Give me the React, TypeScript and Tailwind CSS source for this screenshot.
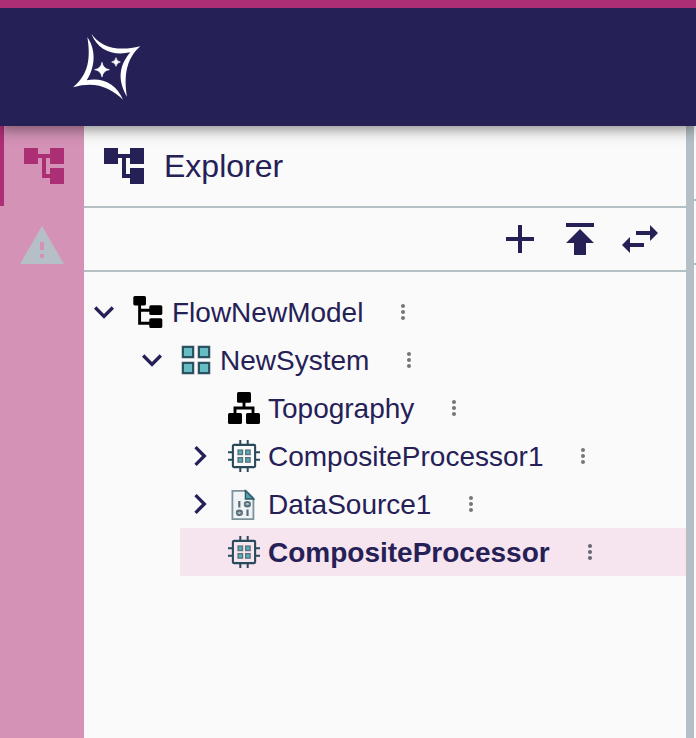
import type { ReactNode } from "react";

function Icon({ d, className }: { d: string; className: string }) {
  return (
    <svg viewBox="0 0 24 24" fill="currentColor" aria-hidden="true" className={className}>
      <path d={d} />
    </svg>
  );
}

const ACCOUNT_TREE = "M22 11V3h-7v3H9V3H2v8h7V8h2v10h4v3h7v-8h-7v3h-2V8h2v3z";
const WARNING = "M1 21h22L12 2 1 21zm12-3h-2v-2h2v2zm0-4h-2v-4h2v4z";
const ADD = "M19 13h-6v6h-2v-6H5v-2h6V5h2v6h6v2z";
const PUBLISH = "M5 4v2h14V4H5zm0 10h4v6h6v-6h4l-7-7-7 7z";
const SWAP =
  "M6.99 11L3 15l3.99 4v-3H14v-2H6.99v-3zM21 9l-3.99-4v3H10v2h7.01v3L21 9z";
const EXPAND_MORE = "M16.59 8.59L12 13.17 7.41 8.59 6 10l6 6 6-6z";
const CHEVRON_RIGHT = "M10 6L8.59 7.41 13.17 12l-4.58 4.59L10 18l6-6z";
const MORE_VERT =
  "M12 8c1.1 0 2-.9 2-2s-.9-2-2-2-2 .9-2 2 .9 2 2 2zm0 2c-1.1 0-2 .9-2 2s.9 2 2 2 2-.9 2-2-.9-2-2-2zm0 6c-1.1 0-2 .9-2 2s.9 2 2 2 2-.9 2-2-.9-2-2-2z";

function Logo() {
  return (
    <svg viewBox="39 99 204 204" fill="#fff" aria-hidden="true" className="size-17">
      <path d="M94 101 C120 138 168 157 241 139 C196 178 192 232 201 290 C176 248 172 202 211 157 C160 168 114 152 94 101Z" />
      <path d="M82 111 C105 144 110 194 80 241 C125 231 168 250 189 299 C152 264 107 242 39 262 C87 223 92 172 82 111Z" />
      <path
        d="M126 187 Q129 206 148 209 Q129 212 126 231 Q123 212 104 209 Q123 206 126 187Z"
        stroke="#fff"
        strokeWidth="2"
      />
      <path
        d="M168 173 Q170 184 181 186 Q170 188 168 199 Q166 188 155 186 Q166 184 168 173Z"
        stroke="#fff"
        strokeWidth="2"
      />
    </svg>
  );
}

function ModelIcon() {
  return (
    <svg viewBox="0 0 32 32" aria-hidden="true" className="size-8 shrink-0">
      <rect x="1.3" y="0" width="12.7" height="9.4" rx="1.6" />
      <rect x="17.3" y="9.2" width="13" height="9.8" rx="1.6" />
      <rect x="17.3" y="22.2" width="13" height="9.8" rx="1.6" />
      <path d="M7.6 8v19.2H18M7.6 14.3H18" fill="none" stroke="#000" strokeWidth="2.9" />
    </svg>
  );
}

function SystemIcon() {
  return (
    <svg viewBox="0 0 32 32" aria-hidden="true" className="size-8 shrink-0">
      {[2, 18].map((x) =>
        [2, 18].map((y) => (
          <g key={x + "-" + y}>
            <rect x={x - 0.5} y={y - 0.5} width="13" height="13" fill="#8fa3ac" />
            <rect x={x + 1} y={y + 1} width="10" height="10" fill="#66bcc0" stroke="#24485a" strokeWidth="1.8" />
          </g>
        ))
      )}
    </svg>
  );
}

function TopographyIcon() {
  return (
    <svg viewBox="0 0 32 32" aria-hidden="true" className="size-8 shrink-0">
      <rect x="9" y="0" width="14" height="10.8" rx="1.6" />
      <rect x="0" y="21" width="14" height="11" rx="1.6" />
      <rect x="18" y="21" width="14" height="11" rx="1.6" />
      <path d="M16 10v6M7 22v-6h18v6" fill="none" stroke="#000" strokeWidth="2.9" />
    </svg>
  );
}

function ProcessorIcon() {
  return (
    <svg viewBox="0 0 32 32" aria-hidden="true" className="size-8 shrink-0">
      <path
        d="M12.3 0v4M19.7 0v4M12.3 28v4M19.7 28v4M0 12.3h4M0 19.7h4M28 12.3h4M28 19.7h4"
        stroke="#2a4a5a"
        strokeWidth="2"
      />
      <rect x="4.9" y="4.9" width="22.2" height="22.2" rx="1" fill="none" stroke="#2a4a5a" strokeWidth="2.1" />
      {[9.4, 17].map((x) =>
        [9.4, 17].map((y) => (
          <g key={x + "-" + y}>
            <rect x={x} y={y} width="5.8" height="5.8" fill="#587280" />
            <rect x={x + 1.4} y={y + 1.4} width="3" height="3" fill="#55b4b6" />
          </g>
        ))
      )}
    </svg>
  );
}

function DataIcon() {
  return (
    <svg viewBox="0 0 32 32" aria-hidden="true" className="size-8 shrink-0">
      <path d="M4.4 2.8H18l7.4 7.4v21H4.4z" fill="#f0f3f4" stroke="#7b929b" strokeWidth="1.8" />
      <path d="M17.4 2.6l8.4 8.4h-8.4z" fill="#4ba3ab" stroke="#2f5566" strokeWidth="1.3" />
      <g fill="none" stroke="#566c79" strokeWidth="2.2">
        <path d="M11.3 13v6.4M19.5 21.6V28" />
        <ellipse cx="19.4" cy="16.2" rx="2.5" ry="2.2" />
        <ellipse cx="11.4" cy="24.8" rx="2.5" ry="2.2" />
      </g>
      <path d="M16.5 16.2h5.6M8.6 24.8h5.6" stroke="#8496a0" strokeWidth="1" />
    </svg>
  );
}

type ItemProps = {
  label: string;
  icon: ReactNode;
  state?: "open" | "closed";
  selected?: boolean;
  children?: ReactNode;
};

function TreeItem({ label, icon, state, selected, children }: ItemProps) {
  return (
    <li role="treeitem" aria-selected={!!selected} aria-expanded={state ? state === "open" : undefined}>
      <div className={selected ? "flex h-12 items-center gap-2 bg-[#f6e4ee]" : "flex h-12 items-center gap-2"}>
        {state ? (
          <button type="button" aria-label={"Toggle " + label} className="size-10 shrink-0">
            <Icon d={state === "open" ? EXPAND_MORE : CHEVRON_RIGHT} className="size-10" />
          </button>
        ) : (
          <span className="w-10 shrink-0" />
        )}
        {icon}
        <span className={selected ? "pt-0.5 font-bold" : "pt-0.5"}>{label}</span>
        <button
          type="button"
          aria-label={"More actions for " + label}
          className={selected ? "ml-5 size-6 text-[#646770]" : "ml-5 size-6 text-[#757575]"}
        >
          <Icon d={MORE_VERT} className="size-6" />
        </button>
      </div>
      {children && (
        <ul role="group" className="pl-12">
          {children}
        </ul>
      )}
    </li>
  );
}

function ToolButton({ label, d }: { label: string; d: string }) {
  return (
    <button type="button" aria-label={label} className="size-12">
      <Icon d={d} className="size-12" />
    </button>
  );
}

export default function App() {
  return (
    <div className="flex min-h-screen flex-col bg-[#fafafa] font-['Liberation_Sans',Arial,sans-serif] text-[#252056]">
      <header className="relative z-10 flex h-[126px] shrink-0 items-center border-t-8 border-[#ac2f76] bg-[#252056] px-[73px] shadow-[0_4px_8px_-2px_rgba(0,0,0,0.2),0_8px_10px_0_rgba(0,0,0,0.14),0_2px_20px_0_rgba(0,0,0,0.12)]">
        <a href="#home" aria-label="Home">
          <Logo />
        </a>
      </header>
      <div className="flex grow">
        <nav aria-label="Views" className="flex w-21 shrink-0 flex-col bg-[#d493b6]">
          <button
            type="button"
            aria-label="Explorer"
            className="flex h-20 items-center justify-center border-l-4 border-[#ac2f76] text-[#ac2f76]"
          >
            <Icon d={ACCOUNT_TREE} className="size-12" />
          </button>
          <button
            type="button"
            aria-label="Validation"
            className="flex h-20 items-center justify-center text-[#b5bfc5]"
          >
            <Icon d={WARNING} className="size-12" />
          </button>
        </nav>
        <main className="min-w-0 grow">
          <div className="flex h-[82px] items-center gap-4 border-b-2 border-[#b3bfc2] px-4">
            <Icon d={ACCOUNT_TREE} className="size-12" />
            <h1 className="text-[32px] leading-10">Explorer</h1>
          </div>
          <div className="flex h-16 items-center justify-end gap-3 border-b-2 border-[#b3bfc2] pr-[22px]">
            <ToolButton label="New model" d={ADD} />
            <ToolButton label="Upload model" d={PUBLISH} />
            <ToolButton label="Synchronize selection" d={SWAP} />
          </div>
          <ul role="tree" aria-label="Explorer" className="py-4 text-[28px] leading-10">
            <TreeItem label="FlowNewModel" icon={<ModelIcon />} state="open">
              <TreeItem label="NewSystem" icon={<SystemIcon />} state="open">
                <TreeItem label="Topography" icon={<TopographyIcon />} />
                <TreeItem label="CompositeProcessor1" icon={<ProcessorIcon />} state="closed" />
                <TreeItem label="DataSource1" icon={<DataIcon />} state="closed" />
                <TreeItem label="CompositeProcessor" icon={<ProcessorIcon />} selected />
              </TreeItem>
            </TreeItem>
          </ul>
        </main>
        <div className="w-2 shrink-0 bg-[#b5bfc5]" />
        <div className="w-0.5 shrink-0">
          <div className="h-[75px] border-b-2 border-[#b3bfc2]" />
          <div className="h-16 border-b-2 border-[#b3bfc2]" />
        </div>
      </div>
    </div>
  );
}
